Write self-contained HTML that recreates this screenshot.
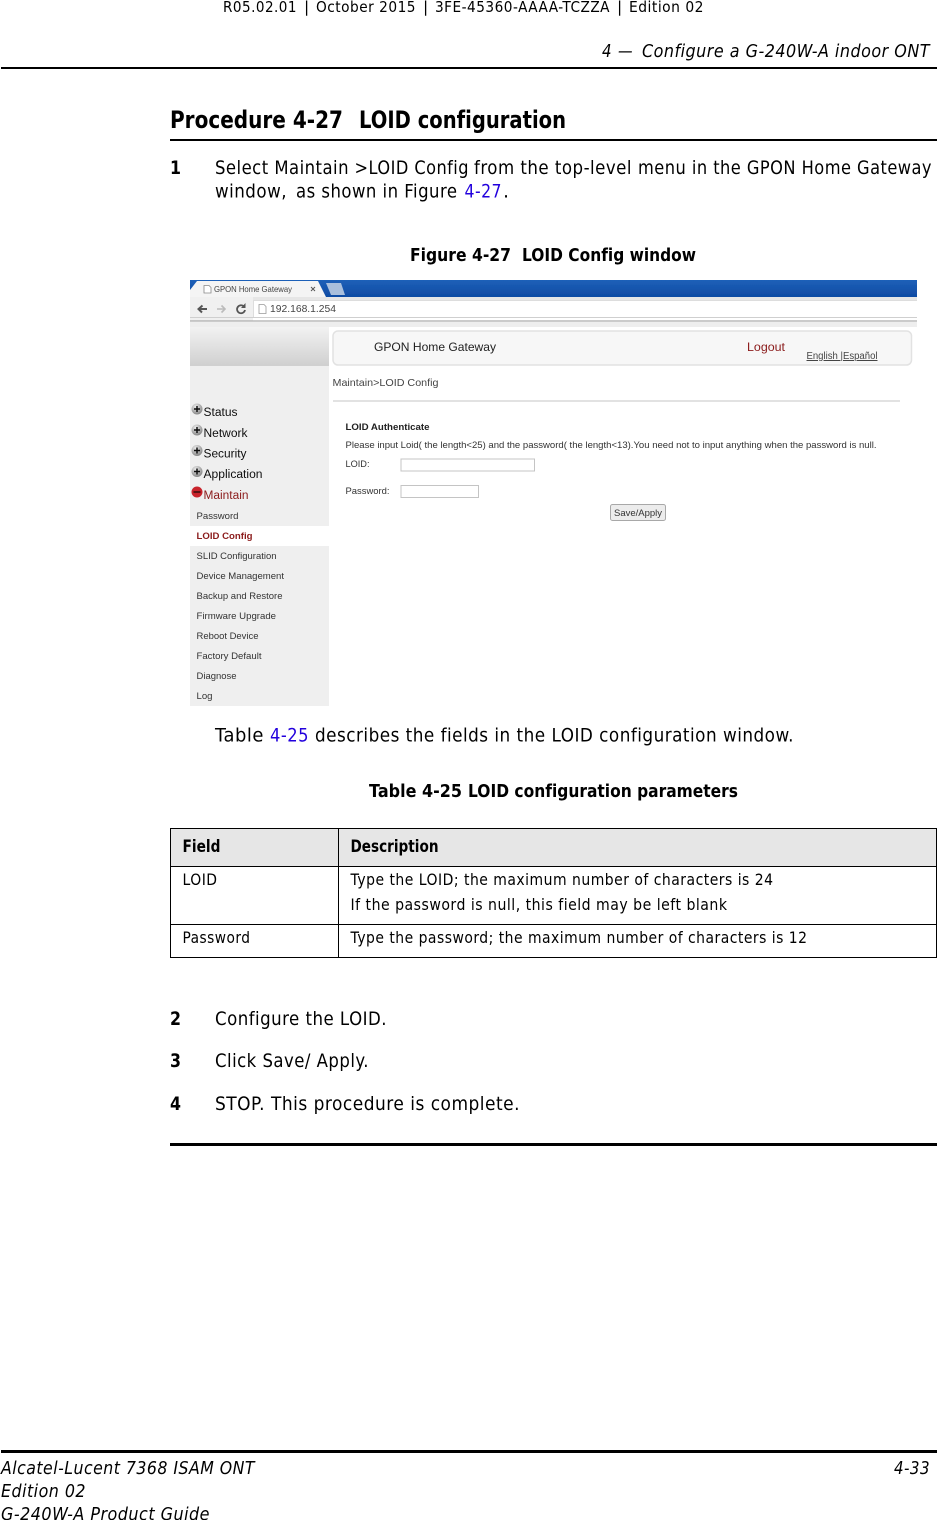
<!DOCTYPE html>
<html><head><meta charset="utf-8"><style>
html,body{margin:0;padding:0;background:#fff;width:937px;height:1520px;overflow:hidden}
svg{display:block}
text{font-variant-ligatures:none;white-space:pre}
.d{font-family:"DejaVu Sans",sans-serif;fill:#000;letter-spacing:.55px}
.b{font-weight:bold;letter-spacing:0}.i{font-style:italic}
.a{font-family:"Liberation Sans",sans-serif;fill:#222}
.m{font-family:"Liberation Sans",sans-serif;fill:#333;font-size:9.2px}
.r{fill:#8b1a1a}.l{fill:#2200dd}.g{fill:#444}
</style></head><body>
<svg width="937" height="1520" viewBox="0 0 937 1520" xmlns="http://www.w3.org/2000/svg">
<defs>
<linearGradient id="g1" x1="0" y1="0" x2="0" y2="1"><stop offset="0" stop-color="#1e60b8"/><stop offset="1" stop-color="#0f4ba3"/></linearGradient>
<linearGradient id="g2" x1="0" y1="0" x2="0" y2="1"><stop offset="0" stop-color="#f2f2f2"/><stop offset="1" stop-color="#cfcfcf"/></linearGradient>
<radialGradient id="gb" cx=".4" cy=".3" r=".8"><stop offset="0" stop-color="#eee"/><stop offset="1" stop-color="#777"/></radialGradient>
<filter id="soft" x="0" y="0" width="100%" height="100%"><feGaussianBlur stdDeviation=".35"/></filter>
</defs>

<text class="d" x="223" y="12" font-size="15.5" textLength="74" lengthAdjust="spacingAndGlyphs">R05.02.01</text>
<text class="d" x="304" y="12" font-size="15.5">|</text>
<text class="d" x="316" y="12" font-size="15.5" textLength="100" lengthAdjust="spacingAndGlyphs">October 2015</text>
<text class="d" x="423" y="12" font-size="15.5">|</text>
<text class="d" x="435" y="12" font-size="15.5" textLength="175" lengthAdjust="spacingAndGlyphs">3FE-45360-AAAA-TCZZA</text>
<text class="d" x="617" y="12" font-size="15.5">|</text>
<text class="d" x="629" y="12" font-size="15.5" textLength="75" lengthAdjust="spacingAndGlyphs">Edition 02</text>
<text class="d i" x="602" y="57" font-size="18" textLength="10" lengthAdjust="spacingAndGlyphs">4</text>
<text class="d i" x="618" y="57" font-size="18" textLength="15" lengthAdjust="spacingAndGlyphs">—</text>
<text class="d i" x="642" y="57" font-size="18" textLength="288" lengthAdjust="spacingAndGlyphs">Configure a G-240W-A indoor ONT</text>
<rect x="1" y="67" width="936" height="2"/>

<text class="d b" x="170" y="128" font-size="24" textLength="173" lengthAdjust="spacingAndGlyphs">Procedure 4-27</text>
<text class="d b" x="359" y="128" font-size="24" textLength="207" lengthAdjust="spacingAndGlyphs">LOID configuration</text>
<rect x="170" y="139" width="767" height="2"/>

<text class="d b" x="170" y="174" font-size="19" textLength="11" lengthAdjust="spacingAndGlyphs">1</text>
<text class="d" x="215" y="174" font-size="19" textLength="134" lengthAdjust="spacingAndGlyphs">Select Maintain</text>
<text class="d" x="354.500" y="174" font-size="19" textLength="114.500" lengthAdjust="spacingAndGlyphs">&gt;LOID Config</text>
<text class="d" x="474" y="174" font-size="19" textLength="158" lengthAdjust="spacingAndGlyphs">from the top-level</text>
<text class="d" x="638" y="174" font-size="19" textLength="294" lengthAdjust="spacingAndGlyphs">menu in the GPON Home Gateway</text>
<text class="d" x="215" y="197.500" font-size="19" textLength="72" lengthAdjust="spacingAndGlyphs">window,</text>
<text class="d" x="296" y="197.500" font-size="19" textLength="161.500" lengthAdjust="spacingAndGlyphs">as shown in Figure</text>
<text class="d l" x="464.500" y="197.500" font-size="19" textLength="37.500" lengthAdjust="spacingAndGlyphs">4-27</text>
<text class="d" x="503" y="197.500" font-size="19">.</text>

<text class="d b" x="410" y="261" font-size="18" textLength="101" lengthAdjust="spacingAndGlyphs">Figure 4-27</text>
<text class="d b" x="522" y="261" font-size="18" textLength="174" lengthAdjust="spacingAndGlyphs">LOID Config window</text>

<!-- screenshot -->
<g filter="url(#soft)">
<rect x="190" y="280" width="727" height="426" fill="#fff"/>
<rect x="190" y="280" width="727" height="17" fill="url(#g1)"/>
<path d="M190 297V290L197 281H318L326 297Z" fill="#f4f4f4"/>
<path d="M326 283H341L345 295H331Z" fill="#a9bfdc"/>
<rect x="190" y="297" width="727" height="3" fill="#e6e6e6"/>
<rect x="190" y="300" width="727" height="19" fill="#fff"/>
<rect x="190" y="297" width="63" height="24" fill="#f0f0f0"/>
<path d="M917 300.500H253.500V317.500H917" fill="#fff" stroke="#ddd"/>
<rect x="190" y="317" width="727" height="1" fill="#cfcfcf"/>
<rect x="190" y="320" width="727" height="2" fill="#a8a8a8" opacity=".6"/>
<rect x="190" y="322" width="727" height="5" fill="#eeeeee"/>
<path d="M204 285.500h5l2 2v5.500h-7z" fill="#fff" stroke="#888" stroke-width=".8"/>
<text class="a g" x="214" y="292" font-size="8.500" textLength="78" lengthAdjust="spacingAndGlyphs">GPON Home Gateway</text>
<path d="M311 287l4 4m0-4l-4 4" stroke="#555" stroke-width="1"/>
<path d="M207 309h-8m3.500-3.500L198.500 309l3.500 3.500" fill="none" stroke="#555" stroke-width="2"/>
<path d="M217 309h8m-3.500-3.500L225 309l-3.500 3.500" fill="none" stroke="#bbb" stroke-width="1.600"/>
<path d="M244 306.500a4 4 0 1 0 1 3.500" fill="none" stroke="#555" stroke-width="1.800"/><path d="M245.500 303v5h-4.500z" fill="#555"/>
<path d="M259 304.500h5l2 2v7h-7z" fill="#fff" stroke="#999" stroke-width=".8"/>
<text class="a g" x="270" y="312" font-size="10" textLength="66" lengthAdjust="spacingAndGlyphs">192.168.1.254</text>

<rect x="190" y="327" width="139" height="39" fill="url(#g2)"/>
<rect x="190" y="366" width="139" height="160" fill="#efefef"/>
<rect x="190" y="546" width="139" height="160" fill="#efefef"/>
<rect x="329" y="327" width="588" height="3" fill="#fff"/>
<rect x="333" y="331" width="578.500" height="34" rx="5" fill="#f7f7f7" stroke="#e2e2e2" stroke-width="1.500"/>
<text class="a" x="374" y="351" font-size="12" textLength="122" lengthAdjust="spacingAndGlyphs">GPON Home Gateway</text>
<text class="a r" x="747" y="351" font-size="12" textLength="38" lengthAdjust="spacingAndGlyphs">Logout</text>
<text class="a g" x="806.500" y="359" font-size="10" textLength="71" lengthAdjust="spacingAndGlyphs" text-decoration="underline">English |Español</text>
<text class="a g" x="332.500" y="386" font-size="10.500" textLength="106" lengthAdjust="spacingAndGlyphs">Maintain&gt;LOID Config</text>
<rect x="333" y="400" width="567" height="2" fill="#e2e2e2"/>
<text class="a" x="345.500" y="430" font-size="9" font-weight="bold" textLength="84" lengthAdjust="spacingAndGlyphs">LOID Authenticate</text>
<text class="m" x="345.500" y="448" textLength="531" lengthAdjust="spacingAndGlyphs">Please input Loid( the length&lt;25) and the password( the length&lt;13).You need not to input anything when the password is null.</text>
<text class="m" x="345.500" y="467" textLength="24" lengthAdjust="spacingAndGlyphs">LOID:</text>
<text class="m" x="345.500" y="494" textLength="44" lengthAdjust="spacingAndGlyphs">Password:</text>
<rect x="401" y="459" width="133.500" height="12" fill="#fff" stroke="#c4c4c4"/>
<rect x="401" y="485.500" width="77.500" height="12" fill="#fff" stroke="#c4c4c4"/>
<rect x="610.500" y="504.500" width="55" height="16" rx="2" fill="#ececec" stroke="#a8a8a8"/>
<text class="m" x="614" y="516" font-size="9.500" textLength="48" lengthAdjust="spacingAndGlyphs">Save/Apply</text>

<circle cx="197" cy="409" r="5.500" fill="url(#gb)"/><path d="M194 409h6m-3-3v6" stroke="#111" stroke-width="1.500"/>
<circle cx="197" cy="430" r="5.500" fill="url(#gb)"/><path d="M194 430h6m-3-3v6" stroke="#111" stroke-width="1.500"/>
<circle cx="197" cy="450.500" r="5.500" fill="url(#gb)"/><path d="M194 450.500h6m-3-3v6" stroke="#111" stroke-width="1.500"/>
<circle cx="197" cy="471.500" r="5.500" fill="url(#gb)"/><path d="M194 471.500h6m-3-3v6" stroke="#111" stroke-width="1.500"/>
<circle cx="197" cy="492" r="5.500" fill="#c8202c"/><path d="M193.500 492h7" stroke="#311" stroke-width="1.500"/>
<text class="a" x="203.500" y="416" font-size="11.500" textLength="34" lengthAdjust="spacingAndGlyphs" style="fill:#111">Status</text>
<text class="a" x="203.500" y="437" font-size="11.500" textLength="44" lengthAdjust="spacingAndGlyphs" style="fill:#111">Network</text>
<text class="a" x="203.500" y="457.500" font-size="11.500" textLength="43" lengthAdjust="spacingAndGlyphs" style="fill:#111">Security</text>
<text class="a" x="203.500" y="478" font-size="11.500" textLength="59" lengthAdjust="spacingAndGlyphs" style="fill:#111">Application</text>
<text class="a r" x="203.500" y="499" font-size="11.500" textLength="45" lengthAdjust="spacingAndGlyphs">Maintain</text>
<text class="m" x="196.500" y="519" textLength="42" lengthAdjust="spacingAndGlyphs">Password</text>
<text class="m r" x="196.500" y="539" font-weight="bold" textLength="56" lengthAdjust="spacingAndGlyphs">LOID Config</text>
<text class="m" x="196.500" y="559" textLength="80" lengthAdjust="spacingAndGlyphs">SLID Configuration</text>
<text class="m" x="196.500" y="579" textLength="87.500" lengthAdjust="spacingAndGlyphs">Device Management</text>
<text class="m" x="196.500" y="599" textLength="86" lengthAdjust="spacingAndGlyphs">Backup and Restore</text>
<text class="m" x="196.500" y="619" textLength="79.500" lengthAdjust="spacingAndGlyphs">Firmware Upgrade</text>
<text class="m" x="196.500" y="639" textLength="62" lengthAdjust="spacingAndGlyphs">Reboot Device</text>
<text class="m" x="196.500" y="659" textLength="65" lengthAdjust="spacingAndGlyphs">Factory Default</text>
<text class="m" x="196.500" y="679" textLength="40" lengthAdjust="spacingAndGlyphs">Diagnose</text>
<text class="m" x="196.500" y="699" textLength="16" lengthAdjust="spacingAndGlyphs">Log</text>
</g>

<text class="d" x="215" y="741.500" font-size="19" textLength="49" lengthAdjust="spacingAndGlyphs">Table</text>
<text class="d l" x="270" y="741.500" font-size="19" textLength="39" lengthAdjust="spacingAndGlyphs">4-25</text>
<text class="d" x="315" y="741.500" font-size="19" textLength="479" lengthAdjust="spacingAndGlyphs">describes the fields in the LOID configuration window.</text>
<text class="d b" x="369" y="797" font-size="18" textLength="93" lengthAdjust="spacingAndGlyphs">Table 4-25</text>
<text class="d b" x="468" y="797" font-size="18" textLength="270" lengthAdjust="spacingAndGlyphs">LOID configuration parameters</text>

<rect x="170" y="828" width="767" height="38" fill="#e6e6e6"/>
<g fill="#000">
<rect x="170" y="828" width="767" height="1"/>
<rect x="170" y="866" width="767" height="1"/>
<rect x="170" y="924" width="767" height="1"/>
<rect x="170" y="957" width="767" height="1"/>
<rect x="170" y="828" width="1" height="130"/>
<rect x="338" y="828" width="1" height="130"/>
<rect x="936" y="828" width="1" height="130"/>
</g>
<text class="d b" x="182.500" y="852" font-size="16.500" textLength="38" lengthAdjust="spacingAndGlyphs">Field</text>
<text class="d b" x="350.500" y="852" font-size="16.500" textLength="88" lengthAdjust="spacingAndGlyphs">Description</text>
<text class="d" x="182.500" y="885" font-size="16" textLength="35" lengthAdjust="spacingAndGlyphs">LOID</text>
<text class="d" x="350.500" y="885" font-size="16" textLength="423" lengthAdjust="spacingAndGlyphs">Type the LOID; the maximum number of characters is 24</text>
<text class="d" x="350.500" y="910" font-size="16" textLength="377" lengthAdjust="spacingAndGlyphs">If the password is null, this field may be left blank</text>
<text class="d" x="182.500" y="943" font-size="16" textLength="68" lengthAdjust="spacingAndGlyphs">Password</text>
<text class="d" x="350.500" y="943" font-size="16" textLength="457" lengthAdjust="spacingAndGlyphs">Type the password; the maximum number of characters is 12</text>

<text class="d b" x="170" y="1025" font-size="19" textLength="11" lengthAdjust="spacingAndGlyphs">2</text>
<text class="d" x="215" y="1025" font-size="19" textLength="172" lengthAdjust="spacingAndGlyphs">Configure the LOID.</text>
<text class="d b" x="170" y="1067" font-size="19" textLength="11" lengthAdjust="spacingAndGlyphs">3</text>
<text class="d" x="215" y="1067" font-size="19" textLength="154" lengthAdjust="spacingAndGlyphs">Click Save/ Apply.</text>
<text class="d b" x="170" y="1110" font-size="19" textLength="11" lengthAdjust="spacingAndGlyphs">4</text>
<text class="d" x="215" y="1110" font-size="19" textLength="305" lengthAdjust="spacingAndGlyphs">STOP. This procedure is complete.</text>
<rect x="170" y="1143" width="767" height="3"/>

<rect x="1" y="1450" width="936" height="3"/>
<text class="d i" x="1" y="1474" font-size="18" textLength="254" lengthAdjust="spacingAndGlyphs">Alcatel-Lucent 7368 ISAM ONT</text>
<text class="d i" x="894" y="1474" font-size="18" textLength="36" lengthAdjust="spacingAndGlyphs">4-33</text>
<text class="d i" x="1" y="1497" font-size="18" textLength="85" lengthAdjust="spacingAndGlyphs">Edition 02</text>
<text class="d i" x="1" y="1520" font-size="18" textLength="209" lengthAdjust="spacingAndGlyphs">G-240W-A Product Guide</text>
</svg>
</body></html>
